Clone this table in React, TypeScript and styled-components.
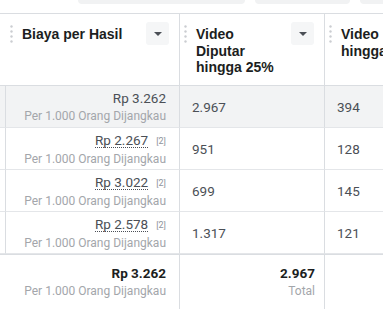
import React from "react";
import styled, { createGlobalStyle } from "styled-components";

const GlobalStyle = createGlobalStyle`
  html, body {
    margin: 0;
    padding: 0;
    background: #ffffff;
    overflow: hidden;
  }
  * {
    box-sizing: border-box;
  }
`;

const Page = styled.div`
  width: 383px;
  height: 309px;
  overflow: hidden;
  font-family: Roboto, "Liberation Sans", sans-serif;
`;

// the bottoms of the toolbar buttons that sit above the table
const Toolbar = styled.div`
  height: 13px;
  display: flex;
  align-items: flex-start;
  padding-left: 78px;
  gap: 10px;
`;

const Pill = styled.div<{ $w: number }>`
  width: ${(p) => p.$w}px;
  height: 4px;
  flex-shrink: 0;
  background: #f1f2f3;
  border-radius: 0 0 4px 4px;
`;

const Grid = styled.div`
  display: grid;
  grid-template-columns: 6px 174px 145px 1fr;
  border-top: 1px solid #dadde1;
`;

const Cell = styled.div<{ $hl?: boolean; $total?: boolean; $last?: boolean }>`
  border-right: ${(p) => (p.$last ? "none" : "1px solid #dadde1")};
  border-bottom: 1px solid #e4e6e9;
  background: ${(p) => (p.$hl ? "#f2f3f4" : "#ffffff")};
  ${(p) => p.$total && "border-top: 1px solid #dadde1;"}
`;

const HeadCell = styled(Cell)`
  height: 72px;
  display: flex;
  align-items: flex-start;
  padding: 8px 10px 0 4px;
  border-bottom-color: #dadde1;
  overflow: hidden;
`;

const Handle = styled.svg`
  width: 3px;
  height: 18px;
  margin-top: 3px;
  flex-shrink: 0;
`;

const HeadTitle = styled.div`
  flex: 1;
  padding: 4px 0 0 9px;
  font-family: "Liberation Sans", Arial, sans-serif;
  font-weight: 700;
  font-size: 14px;
  line-height: 16.5px;
  color: #1c1e21;
  white-space: nowrap;
`;

const SortButton = styled.div`
  width: 23px;
  height: 23px;
  flex-shrink: 0;
  background: #f5f6f7;
  border-radius: 3px;
  display: flex;
  align-items: center;
  justify-content: center;
`;

const Caret = styled.span`
  width: 0;
  height: 0;
  border-left: 4px solid transparent;
  border-right: 4px solid transparent;
  border-top: 4px solid #4b4f56;
`;

const CostCell = styled(Cell)`
  height: 42px;
  padding: 3px 13px 0 0;
  text-align: right;
`;

const NumCell = styled(Cell)`
  height: 42px;
  display: flex;
  align-items: center;
  padding-left: 12px;
  font-size: 13.5px;
  color: #4b4f56;
`;

const Value = styled.div<{ $bold?: boolean }>`
  font-size: 13.5px;
  line-height: 18px;
  color: ${(p) => (p.$bold ? "#1c1e21" : "#4b4f56")};
  font-weight: ${(p) => (p.$bold ? 700 : 400)};
`;

const Dotted = styled.span`
  border-bottom: 1px dotted #4b4f56;
  line-height: 14px;
  display: inline-block;
`;

const Note = styled.span`
  font-size: 9px;
  color: #90949c;
  margin-left: 8px;
  vertical-align: 1px;
`;

const Sub = styled.div`
  font-size: 12px;
  line-height: 18px;
  color: #a3a6ab;
`;

const TotalCell = styled(Cell)`
  height: 60px;
  padding: 9px 9px 0 0;
  text-align: right;
  border-bottom: none;
`;

const TotalCost = styled(TotalCell)`
  padding-right: 13px;
`;

const DragHandle = () => (
  <Handle viewBox="0 0 3 18">
    {[1.5, 6.5, 11.5, 16.5].map((y) => (
      <circle key={y} cx="1.5" cy={y} r="1.2" fill="#cbcdd1" />
    ))}
  </Handle>
);

const rows = [
  { cost: "Rp 3.262", note: "", played: "2.967", next: "394", hl: true },
  { cost: "Rp 2.267", note: "[2]", played: "951", next: "128" },
  { cost: "Rp 3.022", note: "[2]", played: "699", next: "145" },
  { cost: "Rp 2.578", note: "[2]", played: "1.317", next: "121" },
];

const SUB = "Per 1.000 Orang Dijangkau";

function App() {
  return (
    <Page>
      <GlobalStyle />
      <Toolbar>
        <Pill $w={167} />
        <Pill $w={95} />
        <Pill $w={40} />
      </Toolbar>
      <Grid>
        <HeadCell />
        <HeadCell>
          <DragHandle />
          <HeadTitle>Biaya per Hasil</HeadTitle>
          <SortButton>
            <Caret />
          </SortButton>
        </HeadCell>
        <HeadCell>
          <DragHandle />
          <HeadTitle>
            Video
            <br />
            Diputar
            <br />
            hingga 25%
          </HeadTitle>
          <SortButton>
            <Caret />
          </SortButton>
        </HeadCell>
        <HeadCell $last>
          <DragHandle />
          <HeadTitle>
            Video
            <br />
            hingga
          </HeadTitle>
        </HeadCell>

        {rows.map((r) => (
          <React.Fragment key={r.cost}>
            <Cell $hl={r.hl} />
            <CostCell $hl={r.hl}>
              <Value>
                {r.note ? <Dotted>{r.cost}</Dotted> : r.cost}
                {r.note && <Note>{r.note}</Note>}
              </Value>
              <Sub>{SUB}</Sub>
            </CostCell>
            <NumCell $hl={r.hl}>{r.played}</NumCell>
            <NumCell $hl={r.hl} $last>
              {r.next}
            </NumCell>
          </React.Fragment>
        ))}

        <TotalCell $total />
        <TotalCost $total>
          <Value $bold>Rp 3.262</Value>
          <Sub>{SUB}</Sub>
        </TotalCost>
        <TotalCell $total>
          <Value $bold>2.967</Value>
          <Sub>Total</Sub>
        </TotalCell>
        <TotalCell $total $last />
      </Grid>
    </Page>
  );
}

export default App;
